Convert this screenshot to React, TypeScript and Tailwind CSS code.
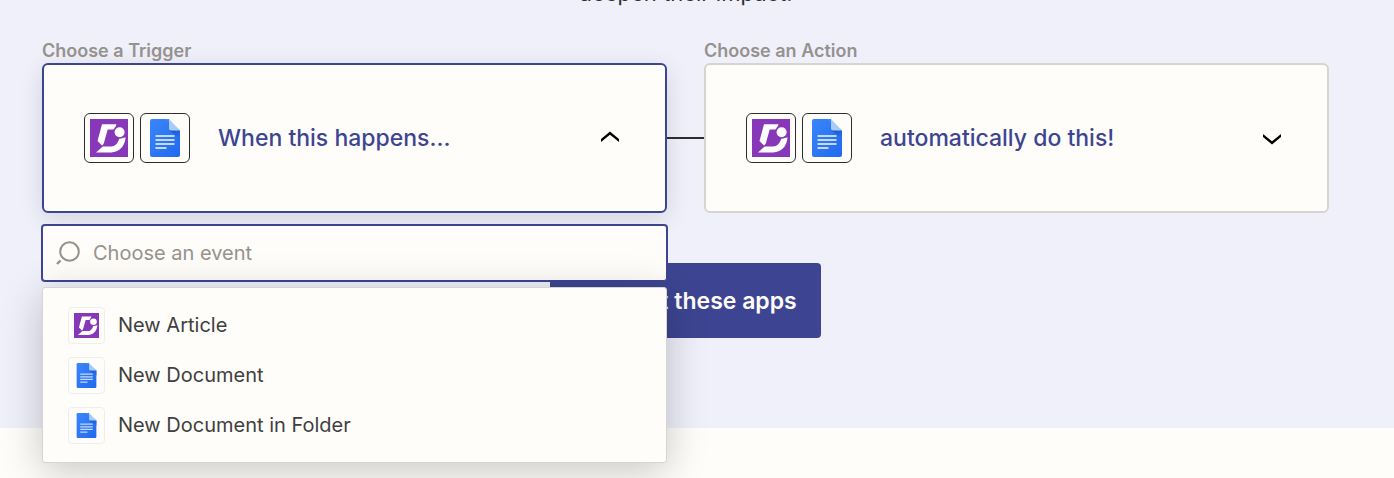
import { useState } from "react";

function DocumentIcon({ className }: { className?: string }) {
  return (
    <svg viewBox="0 0 38 38" className={className} aria-hidden="true">
      <defs>
        <linearGradient id="docs-body" x1="0" y1="0" x2="1" y2="1">
          <stop offset="0" stopColor="#3b86fb" />
          <stop offset="1" stopColor="#2069ee" />
        </linearGradient>
        <linearGradient id="docs-shade" x1="0" y1="0" x2="1" y2="1">
          <stop offset="0" stopColor="#1b55bd" />
          <stop offset="1" stopColor="#2b70ee" />
        </linearGradient>
      </defs>
      <path d="M6 0h14l14 11.5v24.500a2 2 0 0 1-2 2H6a2 2 0 0 1-2-2V2a2 2 0 0 1 2-2z" fill="url(#docs-body)" />
      <path d="M23 11l11 .5v8z" fill="url(#docs-shade)" />
      <path d="M23 0l11 11.5H25a2 2 0 0 1-2-2z" fill="#a9cbfb" />
      <path d="M20 0h3v4z" fill="#3b86fb" />
      <path d="M9.5 16h19v2h-19zM9.5 20h19v2h-19zM9.5 24h19v2h-19zM9.5 28h11v2h-11z" fill="#c4dafc" />
    </svg>
  );
}

function ArticleIcon({ className }: { className?: string }) {
  return (
    <svg viewBox="0 0 38 38" className={className} aria-hidden="true">
      <path d="M0 0h38v38H0z" fill="#8738b8" />
      <path d="M12 5.2H26.5l-2 5.4h-6.800l-4 14.200-1.600 1.800-4.600-4.600z" fill="#fff" />
      <path d="M6 33.400l6.800-6h8.600c4 0 6.800-4 8-8.200l6.200-.600c-.800 9-6.600 14.800-14.400 14.800z" fill="#fff" />
      <circle cx="29.6" cy="13.2" r="6.6" fill="#8738b8" />
      <circle cx="29.6" cy="13.2" r="5" fill="#fff" />
    </svg>
  );
}

function Chevron({ up }: { up?: boolean }) {
  return (
    <svg viewBox="0 0 24 24" className="size-6" aria-hidden="true">
      {up ? (
        <path d="M12 5.5l9 7.6v3l-9-7.4-9 7.4v-3z" fill="#000" />
      ) : (
        <path d="M12 18.5l9-7.6v-3l-9 7.4-9-7.4v3z" fill="#000" />
      )}
    </svg>
  );
}

interface StepButtonProps {
  label: string;
  text: string;
  open: boolean;
  onClick?: () => void;
}

function StepButton({ label, text, open, onClick }: StepButtonProps) {
  return (
    <button
      type="button"
      aria-label={`${label}: ${text}`}
      aria-expanded={open}
      onClick={onClick}
      className={`flex h-[150px] w-full items-center rounded-md border-2 bg-[#fffdf9] pl-10 pr-[43px] text-left ${
        open ? "border-[#3d4592] shadow-[0_6px_24px_rgba(0,0,0,0.12)]" : "border-[#d7d5d2]"
      }`}
    >
      <span className="flex gap-[6px]">
        <span className="flex size-[50px] items-center justify-center rounded-md border border-[#2d2e2e]">
          <ArticleIcon className="size-[38px]" />
        </span>
        <span className="flex size-[50px] items-center justify-center rounded-md border border-[#2d2e2e]">
          <DocumentIcon className="size-[38px]" />
        </span>
      </span>
      <span className="ml-7 flex-1 text-[23px] leading-8 font-medium text-[#3d4592]">{text}</span>
      <Chevron up={open} />
    </button>
  );
}

const events = [
  { name: "New Article", Icon: ArticleIcon },
  { name: "New Document", Icon: DocumentIcon },
  { name: "New Document in Folder", Icon: DocumentIcon },
];

export default function App() {
  const [open, setOpen] = useState(true);
  const [query, setQuery] = useState("");

  return (
    <main className="min-h-screen bg-[#fffdf9] font-['Inter',sans-serif]">
      <section className="flex flex-col bg-[#f0f0fb] pb-[90px] pl-[42px] pr-[65px]">
        <p className="-mt-[23px] text-center text-[22px] leading-8 text-[#2d2e2e]">deepen their impact.</p>

        <div className="mt-[30px] flex">
          <div className="relative flex-1">
            <p className="text-lg leading-6 font-semibold text-[#95928e]">Choose a Trigger</p>
            <StepButton
              label="Choose a Trigger"
              text="When this happens..."
              open={open}
              onClick={() => setOpen(!open)}
            />

            {open && (
              <div className="absolute inset-x-0 top-full z-10 mt-3">
                <label className="flex h-14 items-center rounded-[3px] border border-[#3d4592] bg-[#fffdf9] px-3 ring-1 ring-[#3d4592]">
                  <svg viewBox="0 0 26 26" className="size-[26px]" fill="none" stroke="#95928e" strokeWidth="2" aria-hidden="true">
                    <circle cx="14.5" cy="11.5" r="9.3" />
                    <path d="M5.5 20.5l-3.5 3.5" strokeWidth="2.4" />
                  </svg>
                  <input
                    type="text"
                    aria-label="Choose an event"
                    placeholder="Choose an event"
                    value={query}
                    onChange={(e) => setQuery(e.target.value)}
                    className="ml-3 flex-1 bg-transparent text-xl text-[#403f3e] outline-none placeholder:text-[#95928e]"
                  />
                </label>
                <ul className="mt-[6px] rounded-[3px] border border-[#d7d5d2] bg-[#fffdf9] py-3 shadow-[0_8px_40px_rgba(0,0,0,0.22)]">
                  {events
                    .filter((event) => event.name.toLowerCase().includes(query.toLowerCase()))
                    .map(({ name, Icon }) => (
                      <li key={name}>
                        <button type="button" className="flex h-[50px] w-full items-center gap-[13px] px-[25px] text-left text-xl text-[#403f3e]">
                          <span className="flex size-[37px] items-center justify-center rounded border border-[#efeeea]">
                            <Icon className="size-[25px]" />
                          </span>
                          {name}
                        </button>
                      </li>
                    ))}
                </ul>
              </div>
            )}
          </div>

          <div className="mt-6 flex w-[37px] items-center">
            <div className="h-[2px] w-full bg-[#2d2e2e]" />
          </div>

          <div className="flex-1">
            <p className="text-lg leading-6 font-semibold text-[#95928e]">Choose an Action</p>
            <StepButton label="Choose an Action" text="automatically do this!" open={false} />
          </div>
        </div>

        <button
          type="button"
          className="mt-[50px] h-[75px] self-center rounded bg-[#3d4592] px-6 text-[23px] leading-8 font-semibold text-[#fffdf9]"
        >
          Connect these apps
        </button>
      </section>
    </main>
  );
}
